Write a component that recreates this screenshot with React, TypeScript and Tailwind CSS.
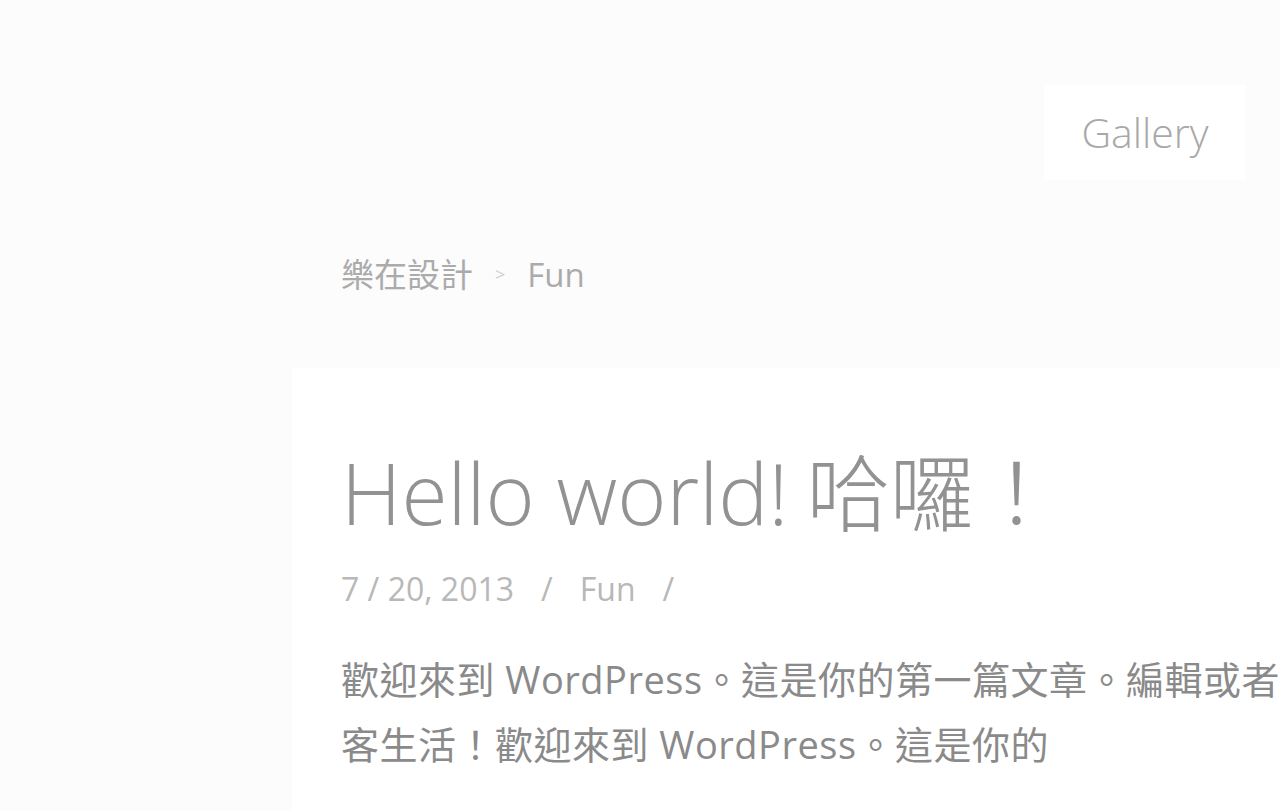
import React from 'react';

const latin = "font-['Open_Sans','Noto_Sans_CJK_TC',sans-serif]";

const App: React.FC = () => {
  return (
    <div className={`min-h-screen w-full overflow-hidden bg-[#fcfcfc] ${latin}`}>
      <header className="flex justify-end pt-[85px] pr-[34px]">
        <a className="flex h-[95px] w-[202px] items-center justify-center bg-white text-[41px] font-light text-[#a8a8a8]">
          Gallery
        </a>
      </header>

      <nav className="mt-[75px] flex items-center pl-[341px] text-[33px] leading-[1.2] text-[#ababab]">
        <span>樂在設計</span>
        <span className="mx-[22px] text-[18px] text-[#cfcfcf]">&gt;</span>
        <span>Fun</span>
      </nav>

      <main className="ml-[292px] mt-[73px] min-h-[450px] bg-white pl-[49px] pt-[75px]">
        <h1 className="whitespace-nowrap text-[84px] font-light leading-[1.2] text-[#929292]">
          Hello world!<span className="ml-[18px]">哈囉！</span>
        </h1>
        <div className="mt-[27px] flex items-center text-[32px] leading-[1.2] text-[#b8b8b8]">
          <span>7 / 20, 2013</span>
          <span className="mx-[27px]">/</span>
          <span>Fun</span>
          <span className="mx-[27px]">/</span>
        </div>
        <div className="mt-[38px] whitespace-nowrap text-[38px] leading-[65px] text-[#8a8a8a]">
          <p className="tracking-[0.5px]">歡迎來到 WordPress。這是你的第一篇文章。編輯或者</p>
          <p className="tracking-[0.5px]">客生活！歡迎來到 WordPress。這是你的</p>
        </div>
      </main>
    </div>
  );
};

export default App;
